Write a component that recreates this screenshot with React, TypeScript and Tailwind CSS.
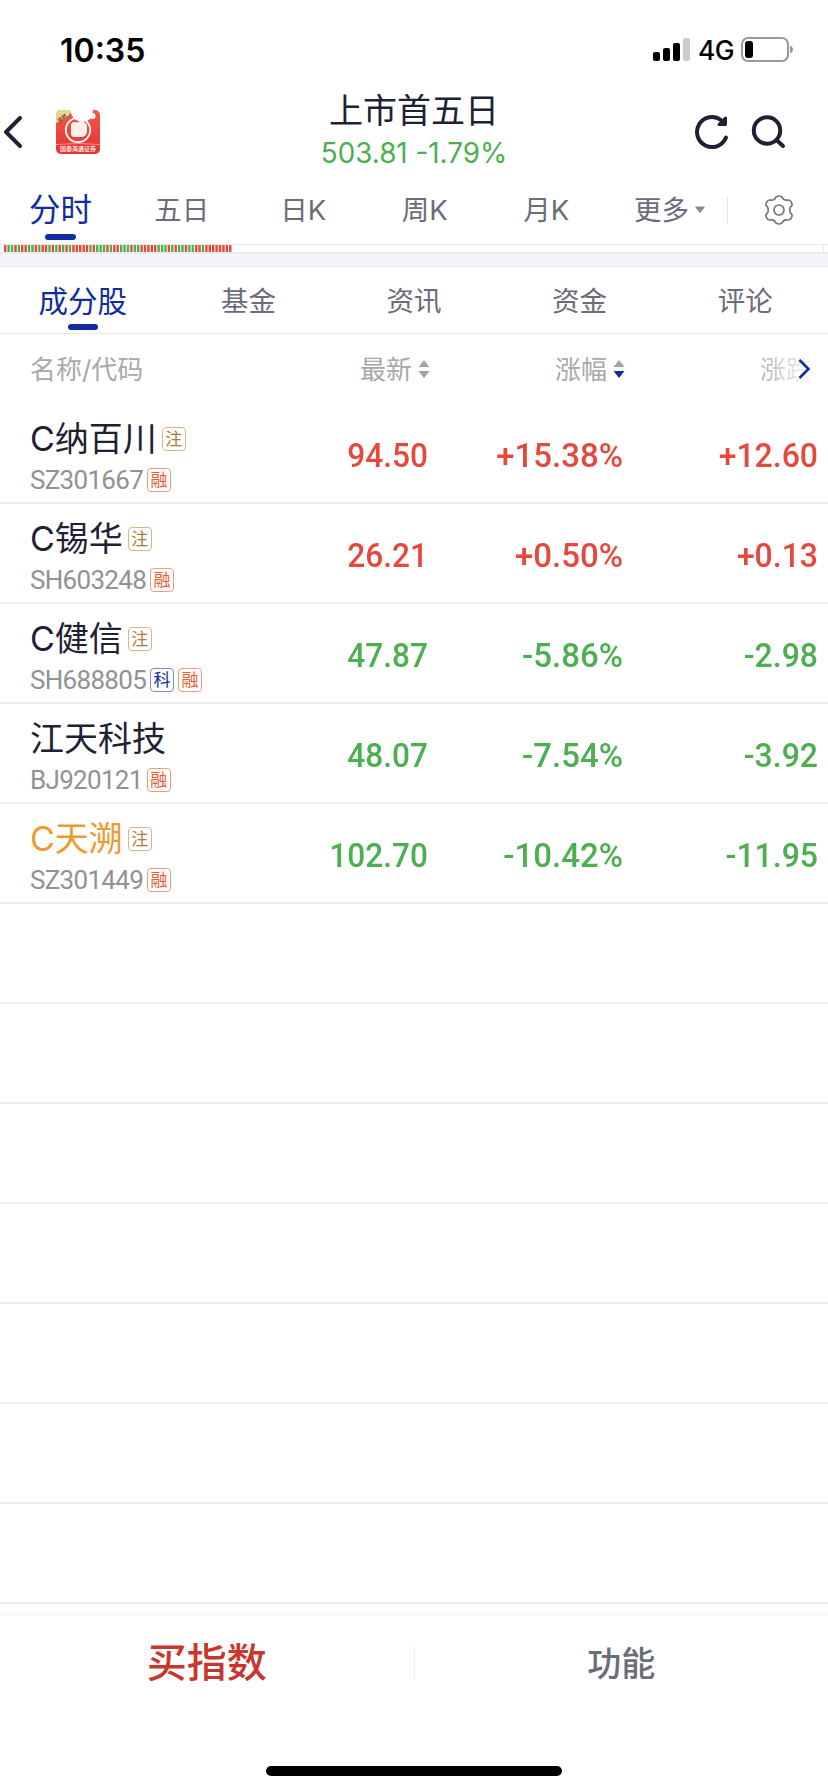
import React from "react";

type Stock = {
  name: string;
  code: string;
  note?: boolean;
  star?: boolean;
  price: string;
  percent: string;
  change: string;
  highlight?: boolean;
};

const stocks: Stock[] = [
  { name: "C纳百川", code: "SZ301667", note: true, price: "94.50", percent: "+15.38%", change: "+12.60" },
  { name: "C锡华", code: "SH603248", note: true, price: "26.21", percent: "+0.50%", change: "+0.13" },
  { name: "C健信", code: "SH688805", note: true, star: true, price: "47.87", percent: "-5.86%", change: "-2.98" },
  { name: "江天科技", code: "BJ920121", price: "48.07", percent: "-7.54%", change: "-3.92" },
  { name: "C天溯", code: "SZ301449", note: true, price: "102.70", percent: "-10.42%", change: "-11.95", highlight: true },
];

const periods = ["五日", "日K", "周K", "月K"];
const sections = ["成分股", "基金", "资讯", "资金", "评论"];

// r = up volume, g = down volume
const volumes = "rggrgrrggrgrrgrgrgrgrrrrrgrgggrgrrgggrggrrrrrgggrgrggrggrrgrrrrrrrr";

const StatusBar = () => (
  <div className="flex h-[88px] items-center justify-between pl-[60px] pr-[33px] pt-[12px]">
    <span className="pt-[2px] text-[32px] font-semibold leading-none text-black">10:35</span>
    <div className="flex items-center">
      <svg width="37" height="24" viewBox="0 0 37 24">
        <rect x="0" y="14" width="7" height="9" rx="2" />
        <rect x="10" y="10" width="7" height="13" rx="2" />
        <rect x="20" y="5" width="7" height="18" rx="2" />
        <rect x="30" y="0" width="7" height="23" rx="2" fill="#ccc" />
      </svg>
      <span className="ml-[8px] w-[35px] text-[26.500px] font-medium leading-none tracking-tight text-black">4G</span>
      <svg className="ml-[8px]" width="54" height="26" viewBox="0 0 54 26">
        <rect x="1" y="1" width="46" height="23" rx="6" fill="none" stroke="#999" strokeWidth="2" />
        <rect x="4" y="4" width="8" height="17" rx="3" />
        <path d="M49 8.500c4 1.500 4 6.500 0 8z" fill="#999" />
      </svg>
    </div>
  </div>
);

const AppLogo = () => (
  <svg width="44" height="44" viewBox="0 0 44 44">
    <defs>
      <clipPath id="logo-clip">
        <rect width="44" height="44" rx="5" />
      </clipPath>
      <linearGradient id="logo-bg" x1="0" y1="0" x2="0" y2="1">
        <stop offset="0" stopColor="#ef5a4b" />
        <stop offset="1" stopColor="#e9302f" />
      </linearGradient>
    </defs>
    <g clipPath="url(#logo-clip)">
      <rect width="44" height="44" fill="url(#logo-bg)" />
      <path d="M0 0H16Q13 8 0 13Z" fill="#ecd394" />
      <text x="1" y="10" fontSize="5" fontWeight="700" fill="#6b4a23" transform="rotate(-38 6 8)">
        涨财
      </text>
      <circle cx="22" cy="20" r="12.200" fill="none" stroke="#fff" strokeWidth="1.800" />
      <circle cx="36.500" cy="6" r="3" fill="#fff" />
      <path d="M14 -1C15 5 17 8 20 10Q26 13.500 32 10.500C36 8 37 4 37 -1Z" fill="#fff" />
      <path d="M15 14Q17 11 21 12.500Q26 10.500 29 13Q31 13 31 16V22Q30 27 25 27H18Q14 26.500 15 21Z" fill="#fbf1e9" />
      <path d="M0 34.500Q22 32.500 44 34.500" fill="none" stroke="#f6958a" strokeWidth="1" />
      <text x="22" y="41.200" textAnchor="middle" fontSize="6" fontWeight="500" fill="#fff">
        国泰海通证券
      </text>
    </g>
  </svg>
);

const Header = () => (
  <div className="grid h-[88px] grid-cols-[1fr_auto_1fr] items-center">
    <div className="flex items-center">
      <svg width="26" height="36" viewBox="0 0 26 36" fill="none" stroke="#1e2133" strokeWidth="4" strokeLinecap="round" strokeLinejoin="round">
        <path d="M20 4L6 18L20 32" />
      </svg>
      <div className="ml-[30px]">
        <AppLogo />
      </div>
    </div>
    <div className="flex flex-col items-center">
      <h1 className="text-[34px] font-normal leading-[40px] text-[#1e2133]">上市首五日</h1>
      <p className="mb-[3px] mt-[5px] text-[27.800px] leading-[34px] text-[#4caf50]">503.81 -1.79%</p>
    </div>
    <div className="flex items-center justify-end pr-[41px]">
      <svg width="36" height="36" viewBox="0 0 36 36" fill="none" stroke="#1e2133" strokeWidth="4" strokeLinecap="round" strokeLinejoin="round">
        <path d="M32 23.500A15 15 0 1 1 27 6" />
        <path d="M31.500 4V10.500H25Z" fill="#1e2133" strokeWidth="3" />
      </svg>
      <svg className="ml-[21px]" width="36" height="36" viewBox="0 0 36 36" fill="none" stroke="#1e2133" strokeWidth="4" strokeLinecap="round">
        <circle cx="16" cy="16.500" r="13.200" />
        <path d="M26 26.500L32 32" />
      </svg>
    </div>
  </div>
);

const PeriodTabs = () => (
  <div className="flex h-[69px] items-stretch border-b border-[#e9e9ea] text-[27.500px] text-[#6c6d7a]">
    <div className="flex w-[121px] flex-col items-center pt-[14px] text-[31.500px] leading-[40px] text-[#112ca0]">
      分时
      <span className="mt-[4px] h-[6px] w-[31px] rounded-[3px] bg-[#112ca0]" />
    </div>
    {periods.map((period) => (
      <div key={period} className="flex w-[121.500px] justify-center pt-[14px] leading-[40px]">
        {period}
      </div>
    ))}
    <div className="flex flex-1 items-start pl-[27px] pt-[14px] leading-[40px]">
      更多
      <svg className="ml-[6px] mt-[16px]" width="10" height="8" viewBox="0 0 10 8">
        <path d="M0.500 1.500Q0 0.500 1 0.500H9Q10 0.500 9.500 1.500L5.500 6.500Q5 7 4.500 6.500Z" fill="#888" />
      </svg>
    </div>
    <div className="flex w-[101px] items-start pt-[21px]">
      <span className="h-[27px] w-px bg-[#e6e6e8]" />
      <svg className="ml-[36px] mt-[-2px]" width="30" height="30" viewBox="0 0 30 30" fill="none" stroke="#77777c" strokeWidth="1.700" strokeLinejoin="round">
        <path d="M12 2Q15 0 18 2Q19.500 6 24 5Q27 5 28 9Q28.500 10.500 26.500 12Q25 15 26.500 18Q28.500 19.500 28 21Q27 25 24 25Q19.500 24 18 28Q15 30 12 28Q10.500 24 6 25Q3 25 2 21Q1.500 19.500 3.500 18Q5 15 3.500 12Q1.500 10.500 2 9Q3 5 6 5Q10.500 6 12 2Z" />
        <circle cx="15" cy="15" r="5" />
      </svg>
    </div>
  </div>
);

const VolumeStrip = () => (
  <div className="flex h-[9px] border-b-2 border-[#ececef] px-[4px]">
    <div className="flex-1 border-r border-[#e9e9ea]">
      <svg className="block" width="230" height="7" viewBox="0 0 230 7">
        {volumes.split("").map((v, i) => (
          <rect key={i} x={i * 3.41} y="0" width="2.400" height="7" fill={v === "r" ? "#e5493d" : "#4caf50"} />
        ))}
      </svg>
    </div>
  </div>
);

const SectionTabs = () => (
  <div className="grid h-[68px] grid-cols-5 border-b border-t border-[#e9e9ea] text-[27.500px] text-[#6c6d7a]">
    {sections.map((section, i) => (
      <div key={section} className="flex flex-col items-center pt-[14px] leading-[40px]">
        {i === 0 ? (
          <>
            <span className="text-[29.500px] text-[#112ca0]">{section}</span>
            <span className="mt-[3px] h-[6px] w-[30px] rounded-[3px] bg-[#112ca0]" />
          </>
        ) : (
          section
        )}
      </div>
    ))}
  </div>
);

const SortArrows = ({ active }: { active?: boolean }) => (
  <svg width="12" height="20" viewBox="0 0 12 20">
    <path d="M6 1L11.500 8H0.500Z" fill="#a3a3a9" />
    <path d="M6 19L0.500 12H11.500Z" fill={active ? "#112ca0" : "#a3a3a9"} />
  </svg>
);

const TableHead = () => (
  <div className="flex h-[70px] items-center text-[26px] text-[#a8a8ad]">
    <div className="flex-1 pl-[30px]">名称/代码</div>
    <div className="flex w-[150px] items-center justify-end gap-[6px]">
      最新
      <SortArrows />
    </div>
    <div className="flex w-[195px] items-center justify-end gap-[6px]">
      涨幅
      <SortArrows active />
    </div>
    <div className="flex w-[203px] items-center pl-[135px]">
      <span className="shrink-0 whitespace-nowrap bg-linear-to-r from-[#b5b5ba] to-[#f8f8f9] bg-clip-text text-transparent">涨跌</span>
      <svg className="-ml-[14px] shrink-0" width="14" height="22" viewBox="0 0 14 22" fill="none" stroke="#112ca0" strokeWidth="2.500">
        <path d="M1.500 2L10.500 11L1.500 20" />
      </svg>
    </div>
  </div>
);

const Tag = ({ label, className }: { label: string; className: string }) => (
  <span className={`flex h-[24px] w-[24px] items-center justify-center rounded-[4px] border text-[17px] leading-none tracking-normal ${className}`}>
    {label}
  </span>
);

const StockRow = ({ stock }: { stock: Stock }) => {
  const color = stock.change.startsWith("+") ? "text-[#e5493d]" : "text-[#4caf50]";

  return (
    <li className="flex h-[100px] items-center border-b-2 border-[#eeeeef]">
      <div className="flex-1 pl-[30px] pt-[12px]">
        <div className={`flex h-[42px] items-center gap-[5px] text-[34px] leading-[42px] ${stock.highlight ? "text-[#ee9a30]" : "text-[#1e2133]"}`}>
          {stock.name}
          {stock.note && <Tag label="注" className="border-[#d6b48c] text-[#b07a3c]" />}
        </div>
        <div className="flex h-[40px] items-center gap-[4px] font-['Roboto','Noto_Sans_CJK_SC',sans-serif] text-[26px] tracking-[-0.700px] text-[#929292]">
          {stock.code}
          {stock.star && <Tag label="科" className="border-[#7c8dcd] text-[#112ca0]" />}
          <Tag label="融" className="border-[#f29a80] text-[#ea5a30]" />
        </div>
      </div>
      <div className={`flex pr-[10px] pt-[4px] text-right font-['Roboto',sans-serif] text-[34px] font-medium ${color}`}>
        <span className="w-[150px] origin-right scale-x-[0.930]">{stock.price}</span>
        <span className="w-[195px] origin-right scale-x-[0.970]">{stock.percent}</span>
        <span className="w-[195px] origin-right scale-x-[0.940]">{stock.change}</span>
      </div>
    </li>
  );
};

const BottomBar = () => (
  <div className="flex h-[188px] flex-col">
    <div className="h-[12px] bg-linear-to-b from-white to-[#f9fafe]" />
    <div className="flex h-[94px] items-center">
      <button className="flex-1 text-[40px] font-medium text-[#c8372d]">买指数</button>
      <span className="h-[32px] w-px bg-[#ececee]" />
      <button className="flex-1 text-[34px] font-medium text-[#6c6d7a]">功能</button>
    </div>
    <div className="mx-auto mt-[56px] h-[10px] w-[296px] rounded-full bg-black" />
  </div>
);

export default function App() {
  return (
    <div className="h-[1792px] w-[828px] overflow-hidden bg-white font-['Inter','Noto_Sans_CJK_SC',sans-serif]">
      <StatusBar />
      <Header />
      <PeriodTabs />
      <VolumeStrip />
      <div className="h-[12px] bg-[#f4f5f9]" />
      <SectionTabs />
      <TableHead />
      <ul>
        {stocks.map((stock) => (
          <StockRow key={stock.code} stock={stock} />
        ))}
        {Array.from({ length: 7 }, (_, i) => (
          <li key={i} className="h-[100px] border-b-2 border-[#eeeeef]" />
        ))}
      </ul>
      <BottomBar />
    </div>
  );
}
